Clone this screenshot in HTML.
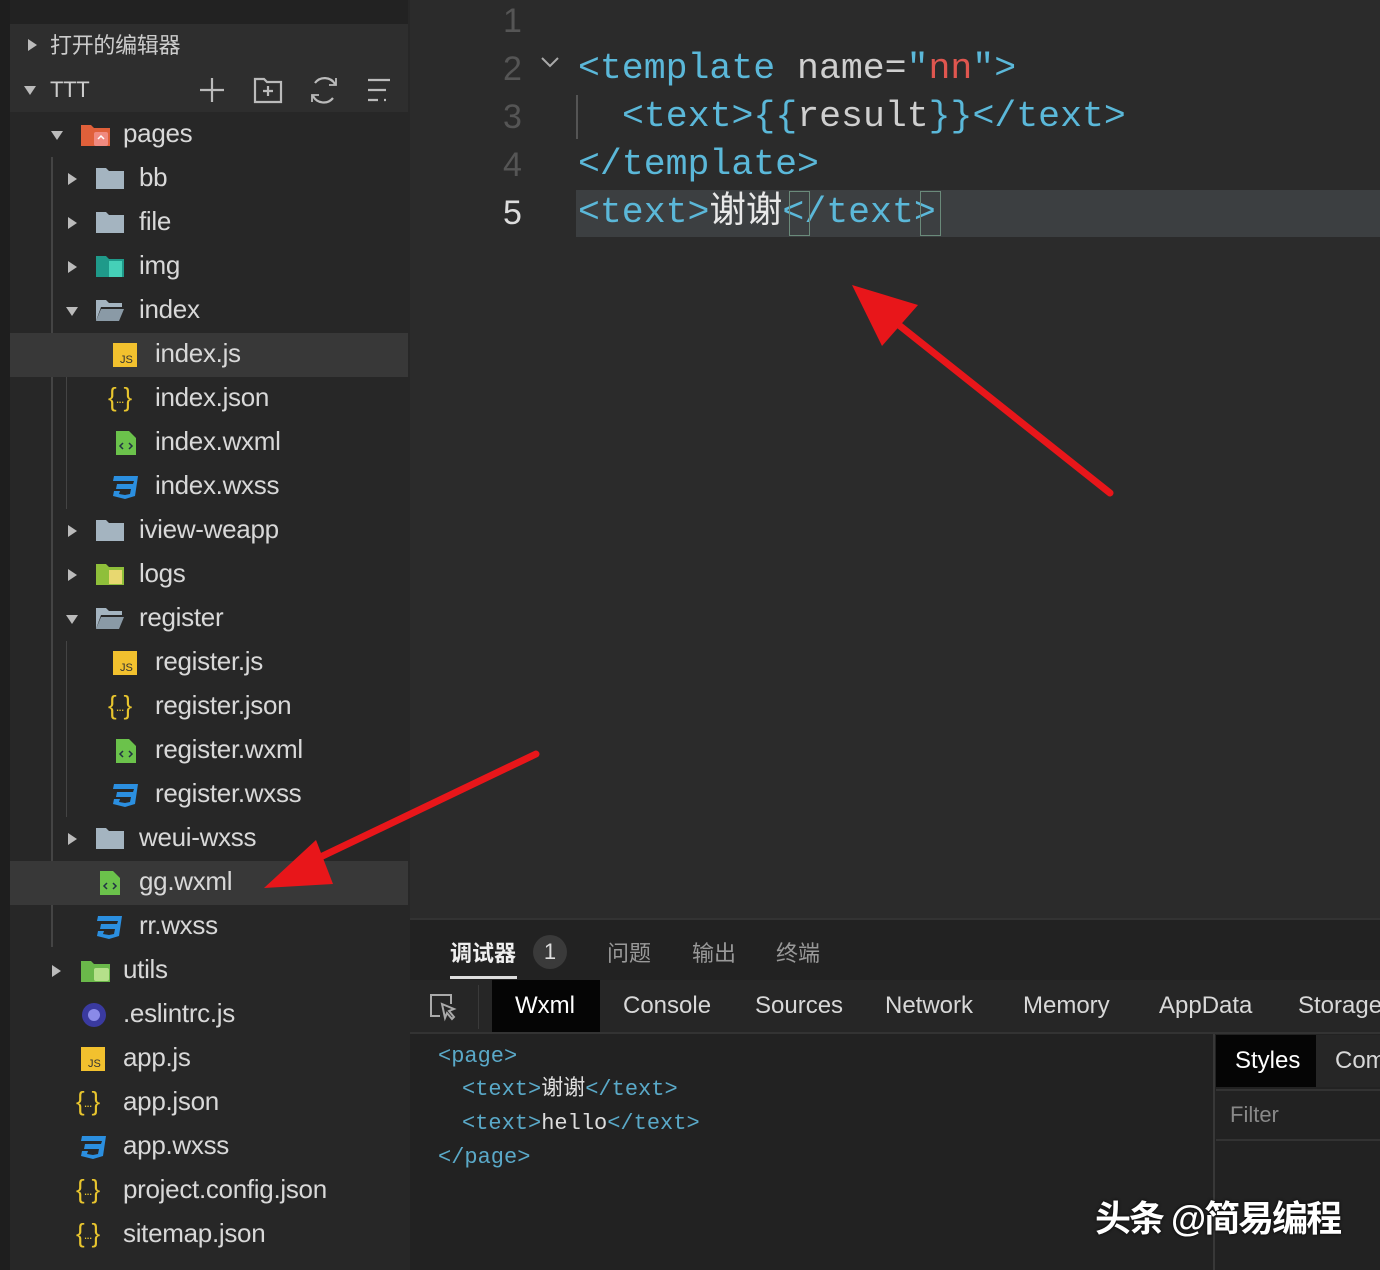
<!DOCTYPE html>
<html><head><meta charset="utf-8"><style>
*{margin:0;padding:0;box-sizing:border-box}
body{width:1380px;height:1270px;background:#2b2b2b;position:relative;overflow:hidden;font-family:"Liberation Sans","Noto Sans CJK SC",sans-serif;color:#d4d4d4}
.a{position:absolute}
#side{left:0;top:0;width:410px;height:1270px;background:#272727}
.row{position:absolute;left:10px;width:398px;height:44px}
.sel{background:#383838}
.t{position:absolute;font-size:26px;line-height:44px;top:-2px;color:#d8d8d8;white-space:nowrap;letter-spacing:-0.3px}
.ar{position:absolute;width:0;height:0}
.ad{border-left:6px solid transparent;border-right:6px solid transparent;border-top:9px solid #bbb;top:18px}
.arr{border-top:6px solid transparent;border-bottom:6px solid transparent;border-left:9px solid #bbb;top:16px}
.ic{position:absolute;top:9px}
.js{position:absolute;top:5px;font-size:26px;color:#e8c52e;font-family:"Liberation Sans",sans-serif;letter-spacing:-1px;white-space:nowrap}
.js span{font-size:13px;position:relative;top:-3px}
.code{font-family:"Liberation Mono","Noto Sans CJK SC",monospace;font-size:36.5px;position:absolute;white-space:pre;line-height:48px}
.tg{color:#5bb8d9}.at{color:#cfcfcf}.st{color:#e0564f}.ln{color:#555;font-family:"Liberation Sans",sans-serif;font-size:34px;position:absolute;left:503px;line-height:48px}
.tab{position:absolute;top:980px;height:52px;line-height:52px;font-size:24px;color:#d8d8d8}
.x{font-family:"Liberation Mono","Noto Sans CJK SC",monospace;font-size:22px;position:absolute;left:438px;white-space:pre;color:#5aa9c8;line-height:34px}
</style></head><body>
<div id="side" class="a"></div>
<div class="a" style="left:0;top:0;width:10px;height:1270px;background:#1e1e1e"></div>
<div class="a" style="left:10px;top:0;width:398px;height:24px;background:#222"></div>
<div class="a" style="left:10px;top:24px;width:398px;height:44px;background:#2e2e2e"></div>
<div class="a" style="left:10px;top:68px;width:398px;height:44px;background:#2e2e2e"></div>
<div class="ar arr a" style="left:28px;top:39px"></div>
<div class="t a" style="left:50px;top:24px;font-size:22px;color:#ccc">打开的编辑器</div>
<div class="ar ad a" style="left:24px;top:86px"></div>
<div class="t a" style="left:50px;top:68px;font-size:22px;color:#ccc">TTT</div>
<svg class="a" style="left:196px;top:72px" width="210" height="36" viewBox="0 0 210 36" fill="none" stroke="#bbb" stroke-width="2.2">
<path d="M16 6v24M4 18h24"/>
<path d="M59 7h9l3 3h14v20H59z M72 14v10M67 19h10"/>
<path d="M139 12a12 12 0 0 0-20-1M117 24a12 12 0 0 0 20 2"/>
<path d="M140 6v7h-7M116 30v-7h7" stroke-width="1.8"/>
<path d="M172 8h22M172 18h18M172 28h10M188 28h2"/>
</svg>
<div class="a" style="left:51px;top:157px;width:2px;height:790px;background:#444"></div>
<div class="a" style="left:66px;top:333px;width:1px;height:176px;background:#444"></div>
<div class="a" style="left:66px;top:641px;width:1px;height:176px;background:#444"></div>

<div class="row" style="top:113px"><div class="ar ad" style="left:41px"></div><svg class="ic" style="left:70px" width="32" height="26"><path d="M1 3h10l3 3h16v18H1z" fill="#e0603a"/><rect x="14" y="10" width="14" height="14" rx="2" fill="#f08a80"/><path d="M18 17l3-3 3 3" stroke="#fff" fill="none" stroke-width="1.5"/></svg><div class="t" style="left:113px">pages</div></div>
<div class="row" style="top:157px"><div class="ar arr" style="left:58px"></div><svg class="ic" style="left:85px" width="30" height="24"><path d="M1 2h10l3 3h15v18H1z" fill="#a4b4c0"/></svg><div class="t" style="left:129px">bb</div></div>
<div class="row" style="top:201px"><div class="ar arr" style="left:58px"></div><svg class="ic" style="left:85px" width="30" height="24"><path d="M1 2h10l3 3h15v18H1z" fill="#a4b4c0"/></svg><div class="t" style="left:129px">file</div></div>
<div class="row" style="top:245px"><div class="ar arr" style="left:58px"></div><svg class="ic" style="left:85px" width="30" height="24"><path d="M1 2h10l3 3h15v18H1z" fill="#1f9a8a"/><rect x="14" y="7" width="13" height="16" fill="#45d0b8"/></svg><div class="t" style="left:129px">img</div></div>
<div class="row" style="top:289px"><div class="ar ad" style="left:56px"></div><svg class="ic" style="left:85px" width="30" height="24"><path d="M1 2h10l3 3h13v4H6L1 23z" fill="#a4b4c0"/><path d="M6 11h23l-5 12H1z" fill="#8a9aa6"/></svg><div class="t" style="left:129px">index</div></div>
<div class="row sel" style="top:333px"><svg class="ic" style="left:103px" width="26" height="26"><rect width="24" height="24" y="1" fill="#f2c12e"/><text x="7" y="21" font-size="11" font-family="Liberation Sans" fill="#333">JS</text></svg><div class="t" style="left:145px">index.js</div></div>
<div class="row" style="top:377px"><div class="js" style="left:98px">{<span>...</span>}</div><div class="t" style="left:145px">index.json</div></div>
<div class="row" style="top:421px"><svg class="ic" style="left:105px" width="22" height="26"><path d="M1 1h13l7 7v17H1z" fill="#6bc24b"/><path d="M8 13l-3 3 3 3M14 13l3 3-3 3" stroke="#234" fill="none" stroke-width="1.5"/></svg><div class="t" style="left:145px">index.wxml</div></div>
<div class="row" style="top:465px"><svg class="ic" style="left:101px" width="28" height="26"><path d="M3 2h24l-3 20-10 3-12-3 1-5h6l-1 3 6 1 5-1 1-5H5l1-5h16l1-3H2z" fill="#2b8fe0"/></svg><div class="t" style="left:145px">index.wxss</div></div>
<div class="row" style="top:509px"><div class="ar arr" style="left:58px"></div><svg class="ic" style="left:85px" width="30" height="24"><path d="M1 2h10l3 3h15v18H1z" fill="#a4b4c0"/></svg><div class="t" style="left:129px">iview-weapp</div></div>
<div class="row" style="top:553px"><div class="ar arr" style="left:58px"></div><svg class="ic" style="left:85px" width="30" height="24"><path d="M1 2h10l3 3h15v18H1z" fill="#8fbf3a"/><rect x="14" y="8" width="13" height="14" fill="#e8d870"/></svg><div class="t" style="left:129px">logs</div></div>
<div class="row" style="top:597px"><div class="ar ad" style="left:56px"></div><svg class="ic" style="left:85px" width="30" height="24"><path d="M1 2h10l3 3h13v4H6L1 23z" fill="#a4b4c0"/><path d="M6 11h23l-5 12H1z" fill="#8a9aa6"/></svg><div class="t" style="left:129px">register</div></div>
<div class="row" style="top:641px"><svg class="ic" style="left:103px" width="26" height="26"><rect width="24" height="24" y="1" fill="#f2c12e"/><text x="7" y="21" font-size="11" font-family="Liberation Sans" fill="#333">JS</text></svg><div class="t" style="left:145px">register.js</div></div>
<div class="row" style="top:685px"><div class="js" style="left:98px">{<span>...</span>}</div><div class="t" style="left:145px">register.json</div></div>
<div class="row" style="top:729px"><svg class="ic" style="left:105px" width="22" height="26"><path d="M1 1h13l7 7v17H1z" fill="#6bc24b"/><path d="M8 13l-3 3 3 3M14 13l3 3-3 3" stroke="#234" fill="none" stroke-width="1.5"/></svg><div class="t" style="left:145px">register.wxml</div></div>
<div class="row" style="top:773px"><svg class="ic" style="left:101px" width="28" height="26"><path d="M3 2h24l-3 20-10 3-12-3 1-5h6l-1 3 6 1 5-1 1-5H5l1-5h16l1-3H2z" fill="#2b8fe0"/></svg><div class="t" style="left:145px">register.wxss</div></div>
<div class="row" style="top:817px"><div class="ar arr" style="left:58px"></div><svg class="ic" style="left:85px" width="30" height="24"><path d="M1 2h10l3 3h15v18H1z" fill="#a4b4c0"/></svg><div class="t" style="left:129px">weui-wxss</div></div>
<div class="row sel" style="top:861px"><svg class="ic" style="left:89px" width="22" height="26"><path d="M1 1h13l7 7v17H1z" fill="#6bc24b"/><path d="M8 13l-3 3 3 3M14 13l3 3-3 3" stroke="#234" fill="none" stroke-width="1.5"/></svg><div class="t" style="left:129px">gg.wxml</div></div>
<div class="row" style="top:905px"><svg class="ic" style="left:85px" width="28" height="26"><path d="M3 2h24l-3 20-10 3-12-3 1-5h6l-1 3 6 1 5-1 1-5H5l1-5h16l1-3H2z" fill="#2b8fe0"/></svg><div class="t" style="left:129px">rr.wxss</div></div>
<div class="row" style="top:949px"><div class="ar arr" style="left:42px"></div><svg class="ic" style="left:70px" width="32" height="26"><path d="M1 3h10l3 3h16v18H1z" fill="#6ab84a"/><rect x="14" y="10" width="15" height="13" rx="2" fill="#b5e08a"/></svg><div class="t" style="left:113px">utils</div></div>
<div class="row" style="top:993px"><svg class="ic" style="left:70px" width="28" height="28"><circle cx="14" cy="13" r="12" fill="#3a3aa0"/><circle cx="14" cy="13" r="6" fill="#8a8ae8"/></svg><div class="t" style="left:113px">.eslintrc.js</div></div>
<div class="row" style="top:1037px"><svg class="ic" style="left:71px" width="26" height="26"><rect width="24" height="24" y="1" fill="#f2c12e"/><text x="7" y="21" font-size="11" font-family="Liberation Sans" fill="#333">JS</text></svg><div class="t" style="left:113px">app.js</div></div>
<div class="row" style="top:1081px"><div class="js" style="left:66px">{<span>...</span>}</div><div class="t" style="left:113px">app.json</div></div>
<div class="row" style="top:1125px"><svg class="ic" style="left:69px" width="28" height="26"><path d="M3 2h24l-3 20-10 3-12-3 1-5h6l-1 3 6 1 5-1 1-5H5l1-5h16l1-3H2z" fill="#2b8fe0"/></svg><div class="t" style="left:113px">app.wxss</div></div>
<div class="row" style="top:1169px"><div class="js" style="left:66px">{<span>...</span>}</div><div class="t" style="left:113px">project.config.json</div></div>
<div class="row" style="top:1213px"><div class="js" style="left:66px">{<span>...</span>}</div><div class="t" style="left:113px">sitemap.json</div></div>

<div class="a" style="left:576px;top:190px;width:804px;height:47px;background:#3c3f41"></div>
<div class="ln" style="top:-3px">1</div>
<div class="ln" style="top:45px">2</div>
<div class="ln" style="top:93px">3</div>
<div class="ln" style="top:141px">4</div>
<div class="ln" style="top:189px;color:#ddd">5</div>
<svg class="a" style="left:540px;top:56px" width="20" height="14"><path d="M2 2l8 8 8-8" stroke="#aaa" stroke-width="2" fill="none"/></svg>
<div class="a" style="left:576px;top:95px;width:2px;height:44px;background:#555"></div>
<div class="code" style="left:578px;top:45px"><span class="tg">&lt;template</span> <span class="at">name=</span><span class="tg">"</span><span class="st">nn</span><span class="tg">"&gt;</span></div>
<div class="code" style="left:622px;top:93px"><span class="tg">&lt;text&gt;{{</span><span class="at">result</span><span class="tg">}}&lt;/text&gt;</span></div>
<div class="code" style="left:578px;top:141px"><span class="tg">&lt;/template&gt;</span></div>
<div class="code" style="left:578px;top:189px"><span class="tg">&lt;text&gt;</span><span style="color:#e8e8e8">谢谢</span><span class="tg">&lt;/text&gt;</span></div>
<div class="a" style="left:789px;top:191px;width:21px;height:45px;border:1px solid #6a8a7a"></div>
<div class="a" style="left:920px;top:191px;width:21px;height:45px;border:1px solid #6a8a7a"></div>

<div class="a" style="left:410px;top:918px;width:970px;height:352px;background:#222"></div>
<div class="a" style="left:410px;top:918px;width:970px;height:2px;background:#333"></div>
<div class="a" style="left:410px;top:980px;width:970px;height:52px;background:#262626"></div>
<div class="a" style="left:410px;top:1032px;width:970px;height:2px;background:#333"></div>
<div class="a" style="left:450px;top:936px;font-size:22px;color:#eee;font-weight:bold">调试器</div>
<div class="a" style="left:450px;top:976px;width:67px;height:3px;background:#ddd"></div>
<div class="a" style="left:533px;top:935px;width:34px;height:34px;border-radius:17px;background:#3a3a3a;color:#ddd;text-align:center;line-height:34px;font-size:22px">1</div>
<div class="a" style="left:607px;top:936px;font-size:22px;color:#999">问题</div>
<div class="a" style="left:692px;top:936px;font-size:22px;color:#999">输出</div>
<div class="a" style="left:776px;top:936px;font-size:22px;color:#999">终端</div>
<svg class="a" style="left:428px;top:992px" width="32" height="32" fill="none" stroke="#aaa" stroke-width="2"><path d="M12 24H3V3h20v9"/><path d="M14 12l12 5-5 2 5 6-2 2-5-6-2 5z"/></svg>
<div class="a" style="left:478px;top:985px;width:1px;height:44px;background:#3a3a3a"></div>
<div class="a" style="left:492px;top:980px;width:108px;height:52px;background:#050505"></div>
<div class="tab" style="left:515px;color:#fff">Wxml</div>
<div class="tab" style="left:623px">Console</div>
<div class="tab" style="left:755px">Sources</div>
<div class="tab" style="left:885px">Network</div>
<div class="tab" style="left:1023px">Memory</div>
<div class="tab" style="left:1159px">AppData</div>
<div class="tab" style="left:1298px">Storage</div>
<div class="x" style="top:1040px">&lt;page&gt;</div>
<div class="x" style="top:1073px;left:462px">&lt;text&gt;<span style="color:#ddd">谢谢</span>&lt;/text&gt;</div>
<div class="x" style="top:1107px;left:462px">&lt;text&gt;<span style="color:#ddd">hello</span>&lt;/text&gt;</div>
<div class="x" style="top:1141px">&lt;/page&gt;</div>
<div class="a" style="left:1213px;top:1034px;width:2px;height:236px;background:#383838"></div>
<div class="a" style="left:1216px;top:1035px;width:164px;height:52px;background:#262626"></div>
<div class="a" style="left:1216px;top:1035px;width:100px;height:52px;background:#050505"></div>
<div class="tab" style="left:1235px;top:1035px;color:#fff">Styles</div>
<div class="tab" style="left:1335px;top:1035px">Com</div>
<div class="a" style="left:1216px;top:1089px;width:164px;height:2px;background:#333"></div>
<div class="a" style="left:1216px;top:1139px;width:164px;height:2px;background:#333"></div>
<div class="a" style="left:1230px;top:1102px;font-size:22px;color:#888">Filter</div>
<div class="a" style="left:1095px;top:1190px;font-size:36px;color:#fff;font-weight:bold;white-space:nowrap;letter-spacing:-2px;text-shadow:0 0 3px #000">头条 @简易编程</div>

<svg class="a" style="left:0;top:0" width="1380" height="1270">
<line x1="1110" y1="493" x2="890" y2="318" stroke="#e8161a" stroke-width="7" stroke-linecap="round"/>
<polygon points="852,285 918,305 882,346" fill="#e8161a"/>
<line x1="536" y1="754" x2="310" y2="862" stroke="#e8161a" stroke-width="7" stroke-linecap="round"/>
<polygon points="264,888 316,840 333,884" fill="#e8161a"/>
</svg>
</body></html>
